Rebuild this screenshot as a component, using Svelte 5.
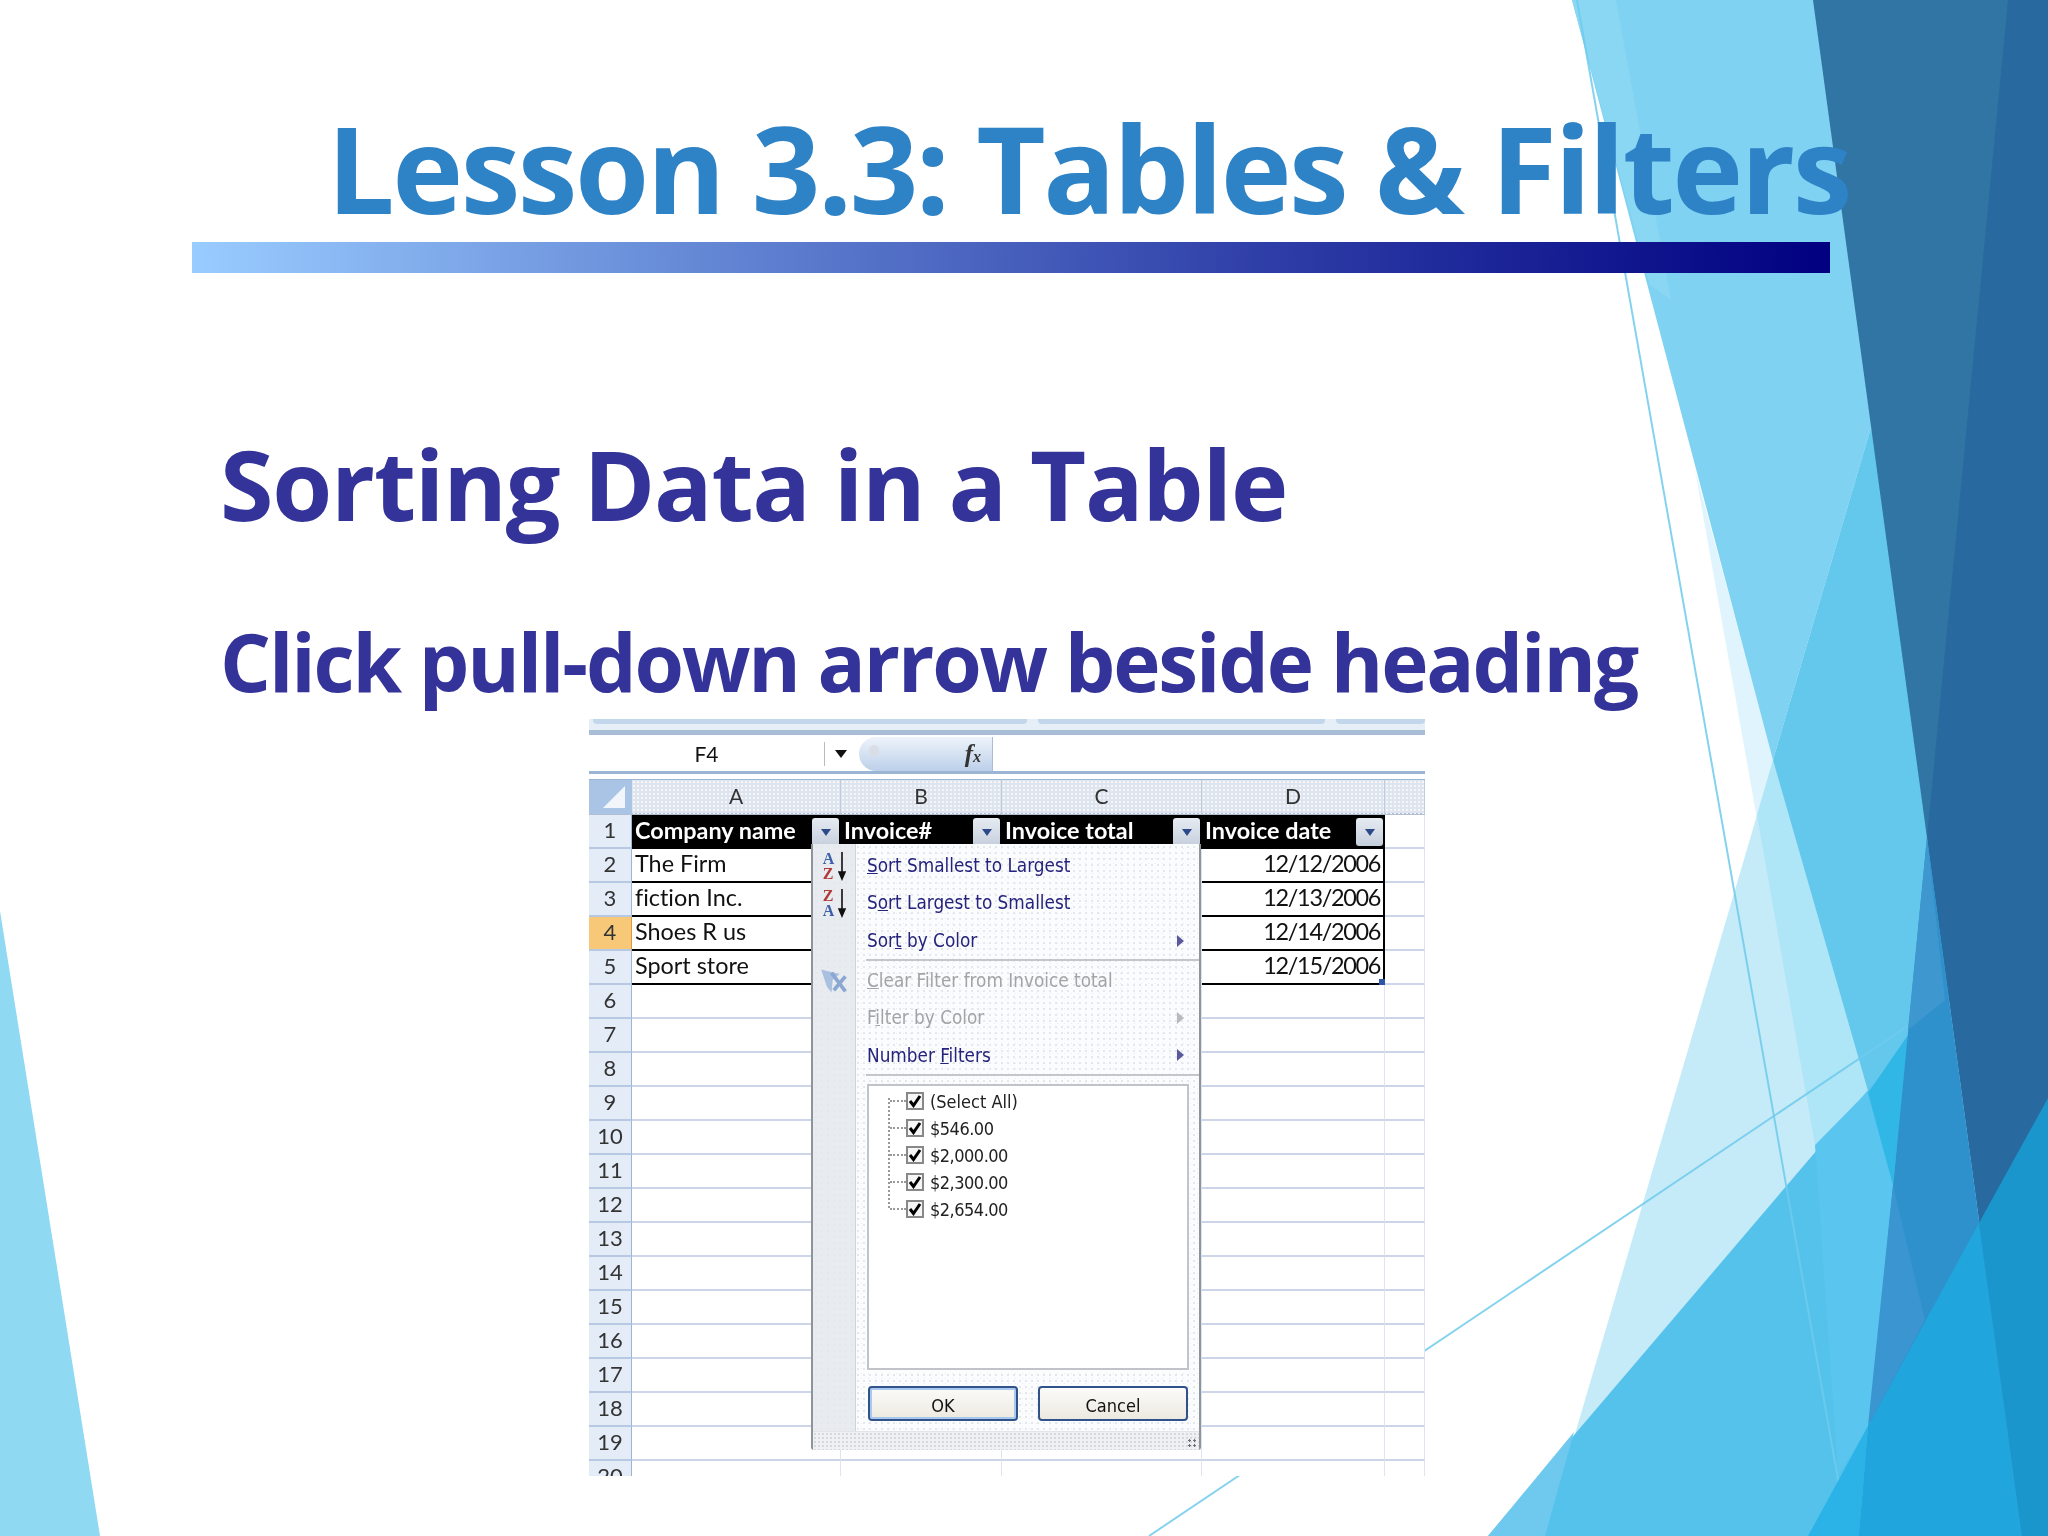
<script>
  // backdrop shapes, painted back to front
  const shapes = [
    { d: "1695,470 1815,1145 1868,1091 1776,768", fill: "#dff4fc" },
    { d: "1870,431 1545,1536 1950,1536", fill: "#c5eaf8" },
    { d: "1773,760 1757,815 1815,1145 1868,1091", fill: "#aee5f7" },
    { d: "1572,0 1850,0 1885,431 1870,431 1773,760", fill: "#7fd2f1" },
    { d: "1572,0 1616,0 1671,300 1650,285", fill: "#8ad7f3" },
    { d: "1870,431 1773,760 1868,1091 1950,995 1950,431", fill: "#64c8ed" },
    { d: "1488,1536 1945,1000 1945,1536", fill: "#55c2ec" },
    { d: "1488,1536 1545,1536 1574,1432", fill: "#6fc8ee" },
    { d: "1815,1145 1868,1091 1893,1185 1868,1426 1838,1476", fill: "#5ac5ee" },
    { d: "1868,1093 1908,1035 1893,1185", fill: "#30b7e6" }
  ];
  const darks = [
    { d: "1813,0 2048,0 2048,1536 2022,1536", fill: "#3075a3" },
    { d: "2008,0 2048,0 2048,1536 2022,1536 1927,837", fill: "#286a9f" },
    { d: "1927,837 2022,1536 1859,1536", fill: "#2e91cc" },
    { d: "1927,837 1945,1000 1908,1030", fill: "#3f97cf" },
    { d: "1893,1185 1925,1320 1868,1426", fill: "#3a95d0" },
    { d: "1808,1536 1868,1426 1859,1536", fill: "#2bb3e7" },
    { d: "1868,1426 1979,1223 2022,1536 1859,1536", fill: "#20a5dc" },
    { d: "1979,1223 2048,1098 2048,1536 2022,1536", fill: "#1a96cc" }
  ];

  const columns = ["A", "B", "C", "D"];
  const headings = ["Company name", "Invoice#", "Invoice total", "Invoice date"];
  const filled = [
    ["The Firm", "12/12/2006"],
    ["fiction Inc.", "12/13/2006"],
    ["Shoes R us", "12/14/2006"],
    ["Sport store", "12/15/2006"]
  ];
  const blank = Array.from({ length: 15 }, (_, i) => i + 6);
  const amounts = ["(Select All)", "$546.00", "$2,000.00", "$2,300.00", "$2,654.00"];
</script>

<div class="slide">
  <svg class="backdrop" viewBox="0 0 2048 1536" aria-hidden="true">
    <polygon points="0,911 100,1536 0,1536" fill="#8fd9f3" />
    {#each shapes as s}
      <polygon points={s.d} fill={s.fill} />
    {/each}
    <line x1="1577" y1="0" x2="1848" y2="1536" class="thin" />
    <line x1="1149" y1="1536" x2="1945" y2="1001" class="thin" />
    {#each darks as s}
      <polygon points={s.d} fill={s.fill} />
    {/each}
  </svg>

  <h1>Lesson 3.3: Tables &amp; Filters</h1>
  <div class="rule"></div>
  <h2 class="first">Sorting Data in a Table</h2>
  <h2 class="second">Click pull-down arrow beside heading</h2>

  <div class="shot">
    <div class="ribbon">
      <span style="width:440px"></span>
      <span style="width:292px"></span>
      <span style="width:90px"></span>
    </div>
    <div class="formula">
      <div class="namebox">F4</div>
      <div class="namearrow"><i></i></div>
      <div class="fx"><b></b><em>f<small>x</small></em></div>
    </div>

    <div class="row colhead">
      <div class="corner">
        <svg viewBox="0 0 43 34" width="43" height="34"><polygon points="36,6 36,28 14,28" fill="#fff" opacity=".85" /></svg>
      </div>
      {#each columns as c}
        <div class="col">{c}</div>
      {/each}
      <div class="col"></div>
    </div>

    <div class="row">
      <div class="num">1</div>
      {#each headings as h}
        <div class="cell head">
          <span>{h}</span>
          <span class="drop"><i></i></span>
        </div>
      {/each}
      <div class="cell"></div>
    </div>

    {#each filled as f, i}
      <div class="row">
        <div class="num" class:active={i === 2}>{i + 2}</div>
        <div class="cell data">{f[0]}</div>
        <div class="cell"></div>
        <div class="cell"></div>
        <div class="cell data date" class:last={i === 3}>{f[1]}</div>
        <div class="cell"></div>
      </div>
    {/each}

    {#each blank as n}
      <div class="row">
        <div class="num">{n}</div>
        <div class="cell"></div>
        <div class="cell"></div>
        <div class="cell"></div>
        <div class="cell"></div>
        <div class="cell"></div>
      </div>
    {/each}

    <div class="menu">
      <div class="item">
        <span class="ico sort"><span class="az"><b class="blue">A</b><b class="red">Z</b></span><svg viewBox="0 0 8 30" width="8" height="30"><path d="M4 1V27M1 21L4 28L7 21Z" stroke="#111" stroke-width="1.6" fill="#111" /></svg></span>
        <span class="label"><u>S</u>ort Smallest to Largest</span>
      </div>
      <div class="item">
        <span class="ico sort"><span class="az"><b class="red">Z</b><b class="blue">A</b></span><svg viewBox="0 0 8 30" width="8" height="30"><path d="M4 1V27M1 21L4 28L7 21Z" stroke="#111" stroke-width="1.6" fill="#111" /></svg></span>
        <span class="label">S<u>o</u>rt Largest to Smallest</span>
      </div>
      <div class="item">
        <span class="ico"></span>
        <span class="label">Sor<u>t</u> by Color</span>
        <i class="more"></i>
      </div>
      <div class="sep"></div>
      <div class="item off">
        <span class="ico">
          <svg viewBox="0 0 26 24" width="30" height="28"><path d="M1 2L17 6L11 11L10 22L6 17Z" fill="#a9c0e0" /><path d="M10 5L22 21M22 8L12 20" stroke="#8aa8d2" stroke-width="3.2" /></svg>
        </span>
        <span class="label"><u>C</u>lear Filter from Invoice total</span>
      </div>
      <div class="item off">
        <span class="ico"></span>
        <span class="label">F<u>i</u>lter by Color</span>
        <i class="more"></i>
      </div>
      <div class="item">
        <span class="ico"></span>
        <span class="label">Number <u>F</u>ilters</span>
        <i class="more"></i>
      </div>
      <div class="sep"></div>

      <div class="list">
        <div class="tree"></div>
        {#each amounts as a}
          <div class="amount">
            <span class="dots"></span>
            <span class="box"><svg viewBox="0 0 14 14" width="14" height="14"><path d="M2 7L5.5 11.5L12 2" stroke="#000" stroke-width="3" fill="none" /></svg></span>
            <span class:money={a[0] === "$"}>{a}</span>
          </div>
        {/each}
      </div>

      <div class="buttons">
        <div class="btn ok">OK</div>
        <div class="btn">Cancel</div>
      </div>
      <div class="foot"><span class="grip"></span></div>
    </div>
  </div>
</div>

<style>
  :global(body) { margin: 0; background: #fff; }

  .slide {
    position: relative;
    width: 2048px;
    height: 1536px;
    overflow: hidden;
    background: #fff;
    font-family: "Open Sans", "Noto Sans", sans-serif;
  }
  .backdrop { position: absolute; inset: 0; width: 2048px; height: 1536px; }
  .thin { stroke: #6fcbec; stroke-width: 2; opacity: 0.85; }

  h1, h2 { position: relative; margin: 0; font-weight: 700; white-space: nowrap; }
  h1 {
    padding: 98px 0 0 327px;
    height: 144px;
    font-size: 120px;
    line-height: 140px;
    letter-spacing: -2.5px;
    color: #2e82c6;
  }
  .rule {
    position: relative;
    margin-left: 192px;
    width: 1638px;
    height: 31px;
    background: linear-gradient(to right, #99ccff, #5e7fd0 35%, #2f3fa8 65%, #000080);
  }
  h2 { margin-left: 220px; color: #333399; }
  .first { margin-top: 145px; height: 130px; font-size: 97px; line-height: 130px; letter-spacing: -1.2px; }
  .second { margin-top: 58px; height: 110px; font-size: 80px; line-height: 110px; letter-spacing: -2.1px; }

  /* the pasted Excel picture */
  .shot {
    position: absolute;
    left: 589px;
    top: 719px;
    width: 836px;
    height: 757px;
    overflow: hidden;
    background: #fff;
    font-family: Lato, "Open Sans", sans-serif;
    font-variant-ligatures: none;
    font-size: 23.4px;
    color: #111;
    filter: blur(0.4px);
  }
  .ribbon { display: flex; gap: 11px; height: 11px; padding-left: 4px; border-bottom: 5px solid #a9bdd6; background: #e6eef7; }
  .ribbon span { display: block; height: 5px; background: #c3d7ec; border-radius: 0 0 4px 4px; }

  .formula {
    display: flex;
    align-items: center;
    height: 35px;
    margin-top: 1px;
    border-bottom: 3px solid #9bb5d5;
  }
  .namebox { width: 236px; text-align: center; font-size: 21px; box-sizing: border-box; padding-right: 0; border-right: 1px solid #bbb; height: 24px; line-height: 24px; }
  .namearrow { width: 32px; display: flex; justify-content: center; }
  .namearrow i { border: 6px solid transparent; border-top: 8px solid #111; border-bottom: 0; }
  .fx {
    position: relative;
    width: 134px;
    height: 34px;
    margin-left: 2px;
    background: linear-gradient(#eef3fa, #bcd0ea);
    border-radius: 17px 0 0 17px;
    border-right: 1px solid #a9bdd6;
    box-sizing: border-box;
  }
  .fx b { position: absolute; left: 10px; top: 8px; width: 10px; height: 12px; border-radius: 50%; background: #d8dde6; }
  .fx em { position: absolute; right: 11px; top: 0; font: italic 700 25px "Liberation Serif", serif; line-height: 34px; color: #333; }
  .fx small { font-size: 16px; }

  .row {
    display: grid;
    grid-template-columns: 43px 209px 161px 200px 183px 40px;
    height: 34px;
  }
  .colhead { height: 36px; margin-top: 5px; border-top: 1px solid #9bb5d5; box-sizing: border-box; background: #dfe5ee; border-bottom: 2px solid #b3c0d3; }
  .corner { background: #a9c4e4; height: 34px; }
  .col {
    text-align: center;
    line-height: 32px;
    color: #333;
    border-right: 1px solid #c0cbdb;
    background-image: radial-gradient(#f4f6fa 0.8px, transparent 1px);
    background-size: 4px 4px;
    font-size: 21px;
  }

  .num {
    text-align: center;
    line-height: 30px;
    font-size: 22px;
    color: #333;
    box-sizing: border-box;
    border-bottom: 2px solid #b6c8e2;
    border-right: 1px solid #9fb5d3;
    background: #e4ecf7;
  }
  .num.active { background: #f7c877; border-right-color: #d99a3c; }
  .cell {
    box-sizing: border-box;
    padding-left: 3px;
    line-height: 29px;
    border-bottom: 2px solid #ccd6e8;
    border-right: 1px solid #dfe5f0;
    white-space: nowrap;
  }
  .cell.head {
    display: flex;
    justify-content: space-between;
    align-items: center;
    padding-right: 2px;
    background: #000;
    border: 0;
    color: #fff;
    font-weight: 700;
  }
  .cell.head > span:first-child { margin-top: -3px; }
  .drop {
    display: flex;
    align-items: center;
    justify-content: center;
    width: 27px;
    height: 28px;
    border-radius: 3px;
    background: linear-gradient(#e6ebf2, #c5cfdc);
  }
  .drop i { border: 5px solid transparent; border-top: 7px solid #2c4a8a; border-bottom: 0; }
  .cell.data { border-bottom-color: #000; }
  .cell.date { text-align: right; padding: 0 3px 0 0; border-right: 2px solid #000; letter-spacing: -1.3px; }
  .cell.last { position: relative; }
  .cell.last::after {
    content: "";
    position: absolute;
    right: -2px;
    bottom: -2px;
    width: 6px;
    height: 6px;
    background: #2c55a5;
  }

  /* filter dropdown */
  .menu {
    position: absolute;
    left: 222px;
    top: 125px;
    width: 390px;
    height: 606px;
    box-sizing: border-box;
    border: 2px solid #8f9499;
    border-top: 0;
    border-radius: 0 0 3px 3px;
    padding-top: 3px;
    background:
      radial-gradient(#e4e7ec 0.8px, transparent 1px) 0 0 / 6px 6px,
      radial-gradient(#e9ebef 0.8px, transparent 1px) 3px 2px / 7px 5px,
      linear-gradient(to right, #e8ebef 42px, #cfd3d9 42px, #cfd3d9 43px, #fbfcfd 43px);
    font-family: "DejaVu Sans Condensed", "DejaVu Sans", sans-serif;
    font-stretch: condensed;
    font-size: 18.8px;
    color: #26237d;
  }
  .item { position: relative; display: flex; align-items: center; height: 37.3px; }
  .item.off { color: #a4a4a6; }
  .sep + .item { margin-top: 1px; }
  .ico { display: flex; align-items: center; justify-content: center; gap: 4px; width: 43px; flex: none; }
  .label { margin-left: 11px; white-space: nowrap; }
  .more { position: absolute; right: 15px; top: 13px; border: 6px solid transparent; border-left: 7px solid currentColor; border-right: 0; opacity: 0.75; }
  .sep { height: 2px; margin-left: 53px; background: #c4c6ca; }

  .az { display: flex; flex-direction: column; font: 700 16px/15px "Liberation Serif", serif; }
  .blue { color: #3b5fa8; }
  .red { color: #b03a3a; }

  .list {
    position: relative;
    margin: 8px 10px 0 54px;
    height: 286px;
    box-sizing: border-box;
    padding-top: 2px;
    border: 2px solid #c0c3c8;
    background: #fff;
    color: #222;
    font-size: 18px;
  }
  .tree { position: absolute; left: 19px; top: 12px; height: 110px; border-left: 2px dotted #999; }
  .amount { display: flex; align-items: center; height: 27px; padding-left: 21px; }
  .money { letter-spacing: -0.5px; }
  .dots { width: 16px; border-top: 2px dotted #999; }
  .box {
    display: flex;
    align-items: center;
    justify-content: center;
    width: 18px;
    height: 18px;
    margin-right: 6px;
    box-sizing: border-box;
    border: 2px solid #888;
    background: #f6f6f6;
  }

  .buttons { display: flex; gap: 20px; margin: 16px 0 0 55px; }
  .btn {
    width: 150px;
    height: 35px;
    box-sizing: border-box;
    border: 2px solid #30528a;
    border-radius: 4px;
    text-align: center;
    line-height: 35px;
    color: #111;
    font-size: 18px;
    background: linear-gradient(#fbfbf9, #ece9e0);
  }
  .btn.ok { box-shadow: inset 0 0 0 2px #a9c8ee; }

  .foot {
    position: relative;
    height: 18px;
    margin-top: 10px;
    border-top: 1px solid #e2e4e8;
    background: #eef0f4;
    background-image: radial-gradient(#d5d9df 0.8px, transparent 1px);
    background-size: 4px 4px;
  }
  .grip {
    position: absolute;
    right: 2px;
    bottom: 2px;
    width: 10px;
    height: 10px;
    background-image: radial-gradient(#6a7078 1.2px, transparent 1.4px);
    background-size: 5px 5px;
  }
</style>
